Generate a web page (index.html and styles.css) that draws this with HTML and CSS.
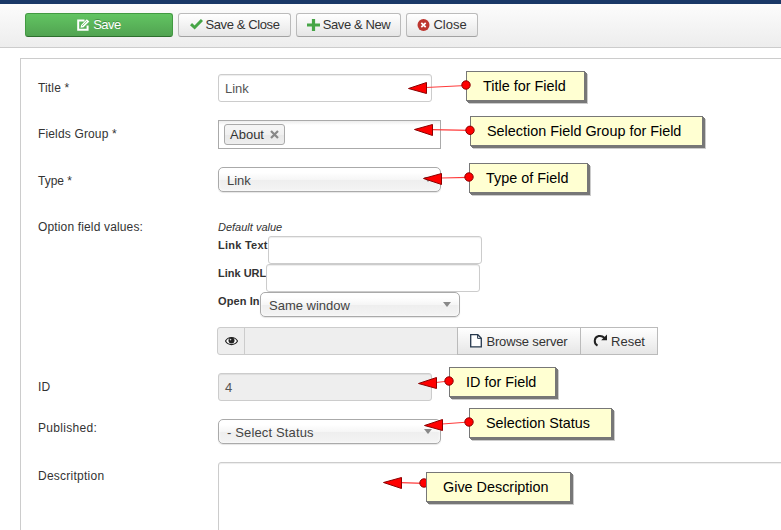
FILE: index.html
```html
<!DOCTYPE html>
<html lang="en">
<head>
<meta charset="utf-8">
<title>Field</title>
<link rel="stylesheet" href="styles.css">
</head>
<body>
<div class="navbar"></div>
<div class="toolbar">
  <button class="btn btn-save"><svg width="13" height="12" viewBox="0 0 13 12"><path d="M7.5 1.5H1.2V10.8H10.6V6.5" fill="none" stroke="#fff" stroke-width="2"/><path d="M3.5 8.8L4.2 5.9L9.8 .3L12.3 2.6L6.5 8.2Z" fill="#fff"/><path d="M5 7L10 2.2" stroke="#55b355" stroke-width=".7"/></svg><span class="t-save">Save</span></button>
  <button class="btn btn-saveclose"><svg width="13" height="12" viewBox="0 0 13 12"><path d="M1 5.2L4.6 8.500L12 1" fill="none" stroke="#46a546" stroke-width="3"/></svg><span class="t-saveclose">Save &amp; Close</span></button>
  <button class="btn btn-savenew"><svg width="13" height="12" viewBox="0 0 13 12"><path d="M6.5 0V12M0 6H13" stroke="#46a546" stroke-width="3.2"/></svg><span class="t-savenew">Save &amp; New</span></button>
  <button class="btn btn-close"><svg width="13" height="12" viewBox="0 0 13 12"><circle cx="6.5" cy="6" r="6" fill="#bd362f"/><path d="M4.3 3.8L8.7 8.2M8.7 3.8L4.3 8.2" stroke="#fff" stroke-width="1.7"/></svg><span class="t-close">Close</span></button>
</div>
<main class="panel">
  <div class="row r-title"><label>Title *</label><div class="input"><span>Link</span></div></div>
  <div class="row r-group"><label>Fields Group *</label><div class="chosen-multi"><span class="chip"><span class="t-about">About</span><svg width="9" height="9" viewBox="0 0 9 9"><path d="M1 1L8 8M8 1L1 8" stroke="#888" stroke-width="2.2"/></svg></span></div></div>
  <div class="row r-type"><label>Type *</label><div class="select"><span>Link</span><i class="caret"></i></div></div>
  <div class="row r-option"><label>Option field values:</label>
    <div class="options">
      <em>Default value</em>
      <div class="option"><b class="b-text">Link Text</b><div class="input"></div></div>
      <div class="option"><b class="b-url">Link URL</b><div class="input"></div></div>
      <div class="option"><b class="b-open">Open In</b><div class="select select-small"><span class="t-same">Same window</span><i class="caret"></i></div></div>
      <div class="media">
        <span class="addon"><svg width="13" height="10" viewBox="0 0 13 10"><path d="M.5 5C3 .3 10 .3 12.5 5C10 9.7 3 9.7 .5 5Z" fill="#fff" stroke="#222" stroke-width="1.2"/><circle cx="6.5" cy="4.6" r="3" fill="#222"/><circle cx="5.5" cy="3.6" r=".8" fill="#ddd"/></svg></span>
        <div class="media-input"></div>
        <button class="media-btn browse"><svg width="12" height="14" viewBox="0 0 12 14"><path d="M.7 .7H7.8L11.3 4.2V12.8H.7Z" fill="#fff" stroke="#26384d" stroke-width="1.3"/><path d="M7.6 .8V4.4H11.2" fill="none" stroke="#26384d"/></svg><span class="t-browse">Browse server</span></button>
        <button class="media-btn reset"><svg width="15" height="13" viewBox="0 0 15 13"><path d="M4.5 11.7C.4 9.3 1 3.1 5.6 2.1C8.2 1.5 10 2.4 11.6 4" fill="none" stroke="#222" stroke-width="2"/><path d="M14 .5V6.3H8.2Z" fill="#222"/></svg><span class="t-reset">Reset</span></button>
      </div>
    </div>
  </div>
  <div class="row r-id"><label>ID</label><div class="input readonly"><span>4</span></div></div>
  <div class="row r-published"><label>Published:</label><div class="select"><span class="t-status">- Select Status</span><i class="caret"></i></div></div>
  <div class="row r-desc"><label>Descritption</label><div class="textarea"></div></div>
</main>
<div class="note n-title"><span>Title for Field</span></div>
<div class="note n-group"><span>Selection Field Group for Field</span></div>
<div class="note n-type"><span>Type of Field</span></div>
<div class="note n-id"><span>ID for Field</span></div>
<div class="note n-status"><span>Selection Status</span></div>
<svg class="arrows" width="781" height="530" viewBox="0 0 781 530">
  <g stroke="#ff3b3b" stroke-width="1.2"><path d="M426 87.5L466 85.5M432 129.7L470 130.3M441 178L469 177.3M436 382.5L449 381M442 424L469 422M401 482.7L424 483.3"/></g>
  <g fill="#f00" stroke="#8c0000" stroke-width="1">
    <path d="M408.500 88.500L426.500 82.500V93.500Z"/><path d="M414.500 129.500L432.500 124.500V135.500Z"/><path d="M423.500 178.500L441.500 173.500V184.500Z"/><path d="M418.500 383.500L436.500 377.500V388.500Z"/><path d="M424.500 425.500L442.500 419.500V430.500Z"/><path d="M383.500 482.500L401.500 477.500V488.500Z"/>
    <circle cx="466" cy="85" r="4.200"/><circle cx="470" cy="130.300" r="4.200"/><circle cx="469" cy="177" r="4.200"/><circle cx="449" cy="381" r="4.200"/><circle cx="469" cy="422" r="4.200"/><circle cx="424" cy="483" r="4.200"/>
  </g>
</svg>
<div class="note n-desc"><span>Give Description</span></div>
</body>
</html>
```
FILE: styles.css
```css
* { box-sizing: border-box; }
body { margin: 0; height: 530px; overflow: hidden; background: #fff; color: #333; font: 12px/18px "Liberation Sans", Arial, sans-serif; }
svg { display: block; flex: none; }
span, em, b { white-space: nowrap; }
.navbar { height: 4px; background: #1a3867; }
.toolbar { display: flex; gap: 5px; height: 44px; padding: 9px 0 0 25px; background: linear-gradient(#fcfcfc, #ededed); border-bottom: 1px solid #ccc; }
.btn { display: flex; align-items: center; justify-content: center; height: 24px; padding: 0; border: 1px solid #bbb; border-bottom-color: #a2a2a2; border-radius: 3px; background: linear-gradient(#fff, #e6e6e6); color: #333; font: 13px/22px "Liberation Sans", Arial, sans-serif; gap: 3px; }
.btn-save { width: 148px; border-color: #429a42 #429a42 #2d6f2d; background: linear-gradient(#62c462, #51a351); color: #fff; text-shadow: 0 -1px 0 rgba(0, 0, 0, .25); }
.btn-saveclose { width: 113px; }
.btn-savenew { width: 105px; }
.btn-close { width: 72px; }
.t-save { letter-spacing: -.5px; }
.t-saveclose, .t-savenew { letter-spacing: -.4px; }
.panel { height: 472px; overflow: hidden; margin: 10px 0 0 20px; padding: 15px 0 0 17px; border: 1px solid #ccc; border-right: 0; border-bottom: 0; }
.row { display: flex; align-items: flex-start; }
.row > label { flex: none; width: 180px; padding-top: 5px; letter-spacing: .15px; }
.r-title { height: 46px; }
.r-group { height: 47px; }
.r-type { height: 46px; }
.r-type > label { letter-spacing: 0; }
.r-option { height: 160px; }
.r-id { height: 46px; }
.r-published { height: 43px; }
.r-desc { height: 68px; }
.r-published > label { padding-top: 0; letter-spacing: .3px; }
.r-desc > label { letter-spacing: .25px; }
.input { width: 214px; height: 28px; padding: 5px 6px 3px; border: 1px solid #ccc; border-radius: 3px; background: #fff; box-shadow: inset 0 1px 1px rgba(0, 0, 0, .075); color: #555; font-size: 13px; }
.readonly { background: #eee; }
.chosen-multi { width: 223px; height: 29px; padding: 3px 5px; border: 1px solid #aaa; background: linear-gradient(#eee 1%, #fff 15%); }
.chip { display: flex; align-items: center; width: 61px; height: 21px; padding-left: 5px; gap: 6px; border: 1px solid #aaa; border-radius: 3px; background: linear-gradient(#f4f4f4 20%, #f0f0f0 50%, #e8e8e8 52%, #eee); font-size: 13px; }
.select { display: flex; justify-content: space-between; align-items: center; width: 223px; height: 25px; padding: 2px 8px 0; border: 1px solid #aaa; border-radius: 5px; background: linear-gradient(#fff 20%, #f6f6f6 50%, #eee 52%, #f4f4f4); box-shadow: inset 0 0 3px #fff, 0 1px 1px rgba(0, 0, 0, .1); color: #444; font-size: 13px; }
.select-small { width: 200px; }
.t-status { letter-spacing: .14px; }
.caret { margin-bottom: 2px; border: 4px solid transparent; border-top: 5px solid #888; border-bottom: 0; }
.options { padding-top: 5px; }
.options > em { display: block; font-size: 11px; }
.option { display: flex; height: 28px; }
.option b { font-size: 11px; }
.b-text { width: 50px; letter-spacing: .25px; }
.b-url { width: 48px; }
.b-open { width: 42px; letter-spacing: .1px; }
.media { display: flex; margin: 7px 0 0 -1px; height: 28px; }
.addon { display: flex; align-items: center; justify-content: center; width: 28px; padding-bottom: 1px; border: 1px solid #ccc; border-radius: 3px 0 0 3px; background: #eee; }
.media-input { width: 214px; margin-left: -1px; border: 1px solid #ccc; background: #eee; }
.media-btn { display: flex; align-items: center; justify-content: center; padding: 1px 0 0; margin-left: -1px; border: 1px solid #bbb; background: linear-gradient(#fff, #e6e6e6); color: #333; gap: 4px; font: 13px/18px "Liberation Sans", Arial, sans-serif; }
.t-browse { letter-spacing: -.15px; }
.browse { width: 124px; }
.browse svg, .reset svg { margin-bottom: 2px; }
.reset { width: 78px; gap: 3px; }
.textarea { flex: none; width: 700px; height: 120px; border: 1px solid #ccc; border-radius: 3px; box-shadow: inset 0 1px 1px rgba(0, 0, 0, .075); }
.note { position: absolute; height: 30px; padding-left: 16px; border: 1px solid #777; background: #ffffd2; box-shadow: 1px 1px 0 #777, 2px 2px 0 #777, 3px 3px 0 #ccc; color: #000; font-size: 14.4px; line-height: 28px; }
.n-title { left: 466px; top: 71px; width: 119px; }
.n-group { left: 470px; top: 116px; width: 233px; }
.n-type { left: 469px; top: 163px; width: 119px; }
.n-id { left: 449px; top: 367px; width: 107px; }
.n-status { left: 469px; top: 408px; width: 143px; }
.n-desc { left: 426px; top: 472px; width: 145px; }
.arrows { position: absolute; left: 0; top: 0; }
```
